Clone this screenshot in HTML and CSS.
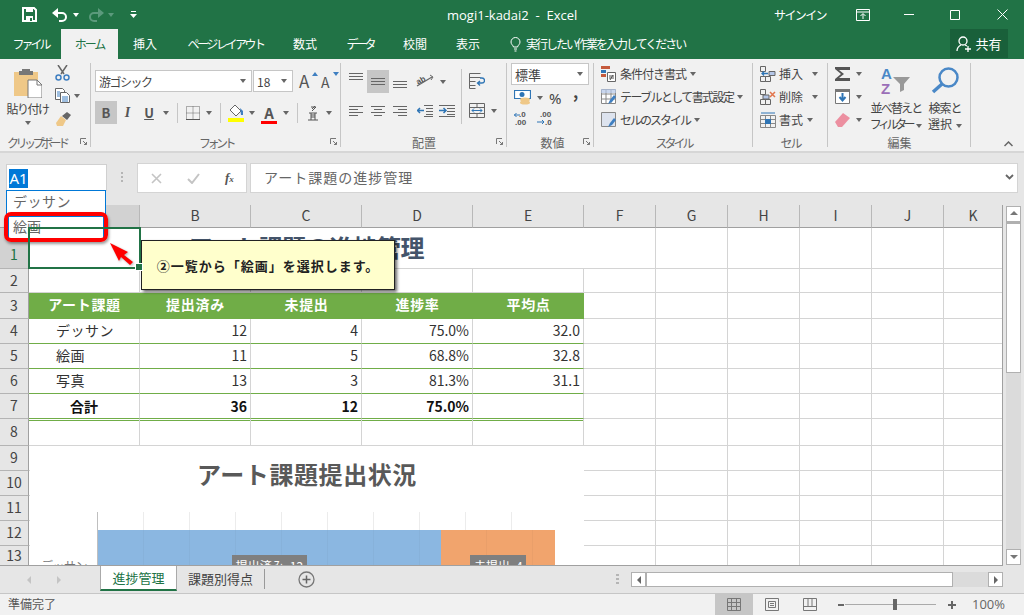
FILE: index.html
```html
<!DOCTYPE html>
<html lang="ja">
<head>
<meta charset="utf-8">
<title>mogi1-kadai2 - Excel</title>
<link rel="stylesheet" href="styles.css">
</head>
<body>
<div class="app">
  <header class="titlebar">
    <div class="qat">
      <svg class="q-save" width="15" height="15" viewBox="0 0 15 15"><path d="M1 1h11l2 2v11H1z" fill="none" stroke="#fff" stroke-width="2"/><path d="M4 1h7v4H4z" fill="#fff"/><path d="M4 9h7v5H4z" fill="#fff"/><path d="M8 11h2v3H8z" fill="#217346"/></svg>
      <svg class="q-undo" width="16" height="14" viewBox="0 0 16 14"><path d="M2 5h8a4 4 0 0 1 0 8H7" fill="none" stroke="#fff" stroke-width="2"/><path d="M6 0v10L0 5z" fill="#fff"/></svg>
      <i class="car wh q-c1"></i>
      <svg class="q-redo" width="16" height="14" viewBox="0 0 16 14"><path d="M14 5H6a4 4 0 0 0 0 8h3" fill="none" stroke="#5b9a7c" stroke-width="2"/><path d="M10 0v10l6-5z" fill="#5b9a7c"/></svg>
      <i class="car dim q-c2"></i>
      <svg class="q-more" width="7" height="8" viewBox="0 0 7 8"><path d="M1 0h5v1H1zM0 3h7L3.500 7z" fill="#fff"/></svg>
    </div>
    <div class="doc">mogi1-kadai2&nbsp; -&nbsp; Excel</div>
    <div class="signin">サインイン</div>
    <svg class="w-box" width="14" height="12" viewBox="0 0 14 12"><path d="M.5 .5h13v11H.500zM.5 3h13M7 10V5M4.500 7 7 4.500 9.500 7" fill="none" stroke="#fff"/></svg>
    <svg class="w-min" width="10" height="1" viewBox="0 0 10 1"><path d="M0 0h10v1H0z" fill="#fff"/></svg>
    <svg class="w-max" width="10" height="10" viewBox="0 0 10 10"><path d="M.5 .5h9v9h-9z" fill="none" stroke="#fff"/></svg>
    <svg class="w-close" width="11" height="11" viewBox="0 0 11 11"><path d="M.5 .5l10 10M10.500 .5l-10 10" stroke="#fff" fill="none"/></svg>
  </header>

  <nav class="tabs">
    <div class="tab k3">ファイル</div>
    <div class="tab on k2">ホーム</div>
    <div class="tab">挿入</div>
    <div class="tab k25">ページ レイアウト</div>
    <div class="tab">数式</div>
    <div class="tab k3">データ</div>
    <div class="tab">校閲</div>
    <div class="tab">表示</div>
    <div class="tell">
      <svg width="11" height="15" viewBox="0 0 11 15"><path d="M3.500 10C3 8 1 7.500 1 5a4.500 4.500 0 0 1 9 0c0 2.500-2 3-2.500 5zM4 12h3M4.500 14h2" fill="none" stroke="#fff"/></svg>
      <span class="k-t">実行したい作業を入力してください</span>
    </div>
    <div class="share">
      <svg width="15" height="16" viewBox="0 0 15 16"><circle cx="7" cy="5" r="4" fill="none" stroke="#fff" stroke-width="1.300"/><path d="M1 15c0-3 2-5 4-6M9 9l2 1M9 13h6M12 10v6" fill="none" stroke="#fff" stroke-width="1.300"/></svg>
      <span>共有</span>
    </div>
  </nav>

  <section class="ribbon">
    <div class="group g-clip">
      <div class="body">
        <div class="paste">
          <svg width="28" height="30" viewBox="0 0 28 30"><path d="M0 4h24v24H0z" fill="#efc888"/><path d="M8 1h8v2h3v4H5V3h3z" fill="#777"/><path d="M14 12h9l5 5v13H14z" fill="#fff" stroke="#777"/><path d="M23 12v5h5" fill="none" stroke="#777"/></svg>
          <div class="cap k15">貼り付け</div>
          <i class="car"></i>
        </div>
        <div class="rows3 clip-small">
          <div class="ri"><svg width="15" height="16" viewBox="0 0 15 16"><path d="M3 0l6 9M12 0L6 9" stroke="#666" stroke-width="1.500" fill="none"/><circle cx="3.500" cy="12.500" r="2.500" fill="none" stroke="#3f7fc1" stroke-width="1.500"/><circle cx="11.500" cy="12.500" r="2.500" fill="none" stroke="#3f7fc1" stroke-width="1.500"/></svg></div>
          <div class="ri"><svg width="15" height="15" viewBox="0 0 15 15"><path d="M.5 .5h7l2 2v9H.500z" fill="#fff" stroke="#666"/><path d="M5.500 4.500h6l3 3v7h-9z" fill="#fff" stroke="#666"/><path d="M2 4h3M2 6h3M2 8h3M7 9h6M7 11h6M7 13h6" stroke="#3f7fc1"/></svg><i class="car ml"></i></div>
          <div class="ri"><svg width="16" height="14" viewBox="0 0 16 14"><path d="M1 11l5-7 5 4-3 6H2z" fill="#efc888"/><path d="M7 4l5-4 4 3-4 5z" fill="#666"/></svg></div>
        </div>
      </div>
      <div class="label lk"><span>クリップボード</span><svg class="launch" width="7" height="7" viewBox="0 0 7 7"><path d="M.5 6V.5H6M3 3l3.500 3.500M6.500 4v2.500H4" fill="none" stroke="#777"/></svg></div>
    </div>

    <div class="group g-font">
      <div class="body col">
        <div class="f1">
          <div class="combo c-name"><span class="k15">游ゴシック</span><i class="car"></i></div>
          <div class="combo c-size"><span>18</span><i class="car"></i></div>
          <div class="bigA"><span>A</span><i class="tri up"></i></div>
          <div class="smallA"><span>A</span><i class="tri dn"></i></div>
        </div>
        <div class="f2">
          <div class="cell-i bold-b">B</div>
          <div class="cell-i ital">I</div>
          <div class="cell-i und">U</div>
          <div class="cell-i"><i class="car"></i></div>
          <div class="cell-i"><i class="vs"></i></div>
          <div class="cell-i"><svg width="14" height="14" viewBox="0 0 14 14"><path d="M.5 .5h13v13H.500zM7 .5v13M.5 7h13" fill="none" stroke="#666" stroke-dasharray="1 1"/><path d="M0 13h14v1H0z" fill="#555"/></svg></div>
          <div class="cell-i"><i class="car"></i></div>
          <div class="cell-i"><i class="vs"></i></div>
          <div class="cell-i"><svg width="17" height="18" viewBox="0 0 17 18"><path d="M7 1l6 6-5 5-6-6z" fill="#fff" stroke="#666"/><path d="M12 4l3 3v4h-2z" fill="#3f7fc1"/><path d="M0 14h16v4H0z" fill="#ffff00"/></svg></div>
          <div class="cell-i"><i class="car"></i></div>
          <div class="cell-i fcolor">A</div>
          <div class="cell-i"><i class="car"></i></div>
          <div class="cell-i"><i class="vs"></i></div>
          <div class="cell-i"><svg width="10" height="16" viewBox="0 0 10 16"><path d="M3 2h5L4 6M7 1 4 4" fill="none" stroke="#555"/><path d="M1 8h8M3 8v7M7 8v7M3 10h4M3 12h4M0 15h10" fill="none" stroke="#555"/></svg></div>
          <div class="cell-i"><i class="car"></i></div>
        </div>
      </div>
      <div class="label lk"><span>フォント</span><svg class="launch" width="7" height="7" viewBox="0 0 7 7"><path d="M.5 6V.5H6M3 3l3.500 3.500M6.500 4v2.500H4" fill="none" stroke="#777"/></svg></div>
    </div>

    <div class="group g-align">
      <div class="body">
        <div class="a-left">
          <div class="a1r">
            <div class="cell-i"><svg class="al-top" width="14" height="8" viewBox="0 0 14 8"><path d="M0 .5h14M0 3.500h14M0 6.500h14" stroke="#666"/></svg></div>
            <div class="cell-i act"><svg width="14" height="8" viewBox="0 0 14 8"><path d="M0 .5h14M0 3.500h14M0 6.500h14" stroke="#666"/></svg></div>
            <div class="cell-i"><svg class="al-bot" width="14" height="8" viewBox="0 0 14 8"><path d="M0 .5h14M0 3.500h14M0 6.500h14" stroke="#666"/></svg></div>
            <div class="cell-i"><svg width="18" height="15" viewBox="0 0 18 15"><path d="M1 12 16 3" stroke="#666" stroke-width="1.300"/><path d="M14 1l3 2-2 3" fill="none" stroke="#666"/><text x="1" y="9" class="ab" transform="rotate(-30 5 8)">ab</text></svg></div>
            <div class="cell-i"><i class="car"></i></div>
          </div>
          <div class="a2r">
            <div class="cell-i"><svg width="14" height="11" viewBox="0 0 14 11"><path d="M0 .5h14M0 3.500h9M0 6.500h14M0 9.500h9" stroke="#666"/></svg></div>
            <div class="cell-i"><svg width="14" height="11" viewBox="0 0 14 11"><path d="M0 .5h14M3 3.500h8M0 6.500h14M3 9.500h8" stroke="#666"/></svg></div>
            <div class="cell-i"><svg width="14" height="11" viewBox="0 0 14 11"><path d="M0 .5h14M5 3.500h9M0 6.500h14M5 9.500h9" stroke="#666"/></svg></div>
            <div class="cell-i"><svg width="16" height="12" viewBox="0 0 16 12"><path d="M7 .5h9M9 3.500h7M9 6.500h7M9 9.500h7M7 11.500h9" stroke="#666"/><path d="M0 5.500h7M3 3 .5 5.500 3 8" stroke="#2f75b5" stroke-width="1.500" fill="none"/></svg></div>
            <div class="cell-i"><svg width="16" height="12" viewBox="0 0 16 12"><path d="M0 .5h16M8 3.500h8M8 6.500h8M8 9.500h8M0 11.500h16" stroke="#666"/><path d="M0 5.500h7M4.500 3 7 5.500 4.500 8" stroke="#2f75b5" stroke-width="1.500" fill="none"/></svg></div>
          </div>
        </div>
        <i class="vs tall"></i>
        <div class="a-right">
          <div class="cell-i a-wrap"><svg width="16" height="16" viewBox="0 0 16 16"><path d="M.5 .5h11M.5 4.500h11M.5 8.500h6M.5 12.500h6M.5 .5v15h6" fill="none" stroke="#666"/><path d="M9 10h4a2 2 0 0 0 0-5h-2M11 8 8.500 10 11 12.500" fill="none" stroke="#2f75b5" stroke-width="1.300"/></svg></div>
          <div class="a-merge"><svg width="16" height="15" viewBox="0 0 16 15"><path d="M.5 .5h15v14H.500zM.5 4.500h15M.5 10.500h15M8 .5v4M8 10.500v4" fill="none" stroke="#666"/><path d="M3 7.500h10M5 5.500l-2 2 2 2M11 5.500l2 2-2 2" fill="none" stroke="#2f75b5"/></svg><i class="car ml"></i></div>
        </div>
      </div>
      <div class="label"><span>配置</span><svg class="launch" width="7" height="7" viewBox="0 0 7 7"><path d="M.5 6V.5H6M3 3l3.500 3.500M6.500 4v2.500H4" fill="none" stroke="#777"/></svg></div>
    </div>

    <div class="group g-num">
      <div class="body col">
        <div class="combo c-num"><span>標準</span><i class="car"></i></div>
        <div class="n2">
          <svg width="17" height="16" viewBox="0 0 17 16"><path d="M.5 .5h16v8H.500z" fill="#fff" stroke="#2f75b5" stroke-width="1.200"/><circle cx="8" cy="4.500" r="2.500" fill="#2f75b5"/><ellipse cx="11" cy="9.500" rx="5" ry="2" fill="#efc888"/><ellipse cx="11" cy="12.500" rx="5" ry="2" fill="#efc888"/></svg>
          <i class="car n-c"></i>
          <span class="pct">%</span>
          <span class="comma">,</span>
        </div>
        <div class="n3">
          <svg width="16" height="15" viewBox="0 0 16 15"><text x="5" y="6" class="dec">.0</text><text x="1" y="14" class="dec">.00</text><path d="M0 4h6M2.500 2 .5 4l2 2" stroke="#2f75b5" fill="none"/></svg>
          <svg width="16" height="15" viewBox="0 0 16 15"><text x="3" y="6" class="dec">.00</text><text x="8" y="14" class="dec">.0</text><path d="M0 11h7M5 9l2 2-2 2" stroke="#2f75b5" fill="none"/></svg>
        </div>
      </div>
      <div class="label"><span>数値</span><svg class="launch" width="7" height="7" viewBox="0 0 7 7"><path d="M.5 6V.5H6M3 3l3.500 3.500M6.500 4v2.500H4" fill="none" stroke="#777"/></svg></div>
    </div>

    <div class="group g-style">
      <div class="body rows3">
        <div class="ri"><svg width="15" height="16" viewBox="0 0 15 16"><path d="M0 0h9v3H0z" fill="#c55a3c"/><path d="M0 4h5v3H0z" fill="#2f75b5"/><path d="M0 8h5v3H0z" fill="#c55a3c"/><path d="M6.500 6.500h8v9h-8z" fill="#fff" stroke="#666"/><path d="M8 10h5M8 12h5M12 9l-3 5" stroke="#555" fill="none"/></svg><span class="k1 txt">条件付き書式</span><i class="car ml"></i></div>
        <div class="ri"><svg width="15" height="16" viewBox="0 0 15 16"><path d="M.5 .5h14v14H.500zM.5 5h14M.5 10h14M5 .5v14M10 .5v14" fill="#fff" stroke="#888"/><path d="M0 0h15v4H0z" fill="#b4c6e7" opacity=".7"/><path d="M7 15l2-4 4-5 2 2-4 5z" fill="#3f7fc1"/></svg><span class="k17 txt">テーブルとして書式設定</span><i class="car ml"></i></div>
        <div class="ri"><svg width="15" height="16" viewBox="0 0 15 16"><path d="M.5 .5h14v14H.500z" fill="#dde3ee" stroke="#888"/><path d="M7 15l2-4 4-5 2 2-4 5z" fill="#3f7fc1"/></svg><span class="k2 txt">セルのスタイル</span><i class="car ml"></i></div>
      </div>
      <div class="label lk3">スタイル</div>
    </div>

    <div class="group g-cell">
      <div class="body rows3">
        <div class="ri"><svg width="16" height="16" viewBox="0 0 16 16"><path d="M.5 .5h5v5h-5zM.5 10.500h5v5h-5zM5.500 10.500h5v5h-5z" fill="none" stroke="#666"/><path d="M9 5.500h6v4H9z" fill="#b4c6e7" stroke="#666"/><path d="M2 7.500h6M4 5.500l-2 2 2 2" stroke="#2f75b5" fill="none" stroke-width="1.300"/></svg><span class="txt">挿入</span><i class="car c-a"></i></div>
        <div class="ri"><svg width="16" height="16" viewBox="0 0 16 16"><path d="M.5 .5h5v5h-5zM.5 10.500h5v5h-5zM5.500 10.500h5v5h-5z" fill="none" stroke="#666"/><path d="M3 6h6v4H3z" fill="#b4c6e7" stroke="#666"/><path d="M10 3l5 5M15 3l-5 5" stroke="#e2754c" stroke-width="1.500"/></svg><span class="txt">削除</span><i class="car c-a"></i></div>
        <div class="ri"><svg width="16" height="16" viewBox="0 0 16 16"><path d="M.5 3.500h15v12H.500zM.5 7.500h15M.5 11.500h15M5.500 3.500v12M10.500 3.500v12" fill="none" stroke="#888"/><path d="M5 7h6v5H5z" fill="#2f75b5"/><path d="M1 1h14" stroke="#2f75b5"/></svg><span class="txt">書式</span><i class="car ml"></i></div>
      </div>
      <div class="label k2">セル</div>
    </div>

    <div class="group g-edit">
      <div class="body">
        <div class="rows3 e-left">
          <div class="ri"><svg width="15" height="14" viewBox="0 0 15 14"><path d="M0 0h15v3H4l5 4-5 4h11v3H0v-2l6-5-6-5z" fill="#555"/></svg><i class="car ml2"></i></div>
          <div class="ri"><svg width="15" height="15" viewBox="0 0 15 15"><path d="M.5 .5h14v14H.500z" fill="#fff" stroke="#777"/><path d="M0 0h15v3H0z" fill="#777"/><path d="M7.500 4v6M4.500 8l3 3.500L10.500 8" stroke="#2f75b5" stroke-width="2" fill="none"/></svg><i class="car ml2"></i></div>
          <div class="ri"><svg width="15" height="14" viewBox="0 0 15 14"><path d="M0 9l8-9 7 5-8 9H3z" fill="#ec8fa0"/></svg><i class="car ml2"></i></div>
        </div>
        <div class="bigbtn b-sort">
          <svg width="30" height="27" viewBox="0 0 30 27"><text x="0" y="12" class="az1">A</text><text x="0" y="27" class="az2">Z</text><path d="M12 10h17l-6 7v6l-4 2v-8z" fill="#999"/></svg>
          <div class="cap2 k18">並べ替えと</div>
          <div class="cap2 k35">フィルター<i class="car ml"></i></div>
        </div>
        <div class="bigbtn b-find">
          <svg width="28" height="27" viewBox="0 0 28 27"><circle cx="17.500" cy="10.500" r="9" fill="none" stroke="#4a88c7" stroke-width="2.500"/><path d="M11 17 2 25" stroke="#4a88c7" stroke-width="3.500"/></svg>
          <div class="cap2 k1">検索と</div>
          <div class="cap2">選択<i class="car ml"></i></div>
        </div>
      </div>
      <div class="label">編集</div>
    </div>

    <svg class="collapse" width="9" height="6" viewBox="0 0 9 6"><path d="M.5 5l4-4 4 4" fill="none" stroke="#666" stroke-width="1.500"/></svg>
  </section>

  <section class="fbar">
    <div class="namebox"><span class="sel">A1</span></div>
    <div class="grip"></div>
    <div class="fbtns">
      <svg width="11" height="11" viewBox="0 0 11 11"><path d="M1 1l9 9M10 1l-9 9" stroke="#c4c4c4" stroke-width="1.600"/></svg>
      <svg width="13" height="11" viewBox="0 0 13 11"><path d="M1 6l4 4 7-9" fill="none" stroke="#c4c4c4" stroke-width="2"/></svg>
      <span class="fx">f<sub>x</sub></span>
    </div>
    <div class="finput"><span>アート課題の進捗管理</span>
      <svg width="9" height="6" viewBox="0 0 9 6"><path d="M1 1l3.500 3.500L8 1" fill="none" stroke="#666" stroke-width="1.800"/></svg>
    </div>
  </section>

  <section class="work">
    <div class="sheet">
      <b class="corner"></b><b class="ch cur">A</b><b class="ch">B</b><b class="ch">C</b><b class="ch">D</b><b class="ch">E</b><b class="ch">F</b><b class="ch">G</b><b class="ch">H</b><b class="ch">I</b><b class="ch">J</b><b class="ch">K</b>

      <b class="rh cur low">1</b><div class="a1"></div><div class="title">アート課題の進捗管理</div><i></i><i></i><i></i><i></i><i></i><i></i>

      <b class="rh">2</b><i></i><i></i><i></i><i></i><i></i><i></i><i></i><i></i><i></i><i></i><i></i>

      <b class="rh">3</b><div class="th">アート課題</div><div class="th">提出済み</div><div class="th">未提出</div><div class="th">進捗率</div><div class="th">平均点</div><i></i><i></i><i></i><i></i><i></i><i></i>

      <b class="rh">4</b><div class="td name">デッサン</div><div class="td">12</div><div class="td">4</div><div class="td">75.0%</div><div class="td">32.0</div><i></i><i></i><i></i><i></i><i></i><i></i>

      <b class="rh">5</b><div class="td name">絵画</div><div class="td">11</div><div class="td">5</div><div class="td">68.8%</div><div class="td">32.8</div><i></i><i></i><i></i><i></i><i></i><i></i>

      <b class="rh">6</b><div class="td name">写真</div><div class="td">13</div><div class="td">3</div><div class="td">81.3%</div><div class="td">31.1</div><i></i><i></i><i></i><i></i><i></i><i></i>

      <b class="rh">7</b><div class="td tot name2">合計</div><div class="td tot">36</div><div class="td tot">12</div><div class="td tot">75.0%</div><div class="td tot"></div><i></i><i></i><i></i><i></i><i></i><i></i>

      <b class="rh">8</b><i class="dbl"></i><i class="dbl"></i><i class="dbl"></i><i class="dbl"></i><i class="dbl"></i><i></i><i></i><i></i><i></i><i></i><i></i>

      <b class="rh">9</b><i></i><i></i><i></i><i></i><i></i><i></i><i></i><i></i><i></i><i></i><i></i>
      <b class="rh">10</b><i></i><i></i><i></i><i></i><i></i><i></i><i></i><i></i><i></i><i></i><i></i>
      <b class="rh">11</b><i></i><i></i><i></i><i></i><i></i><i></i><i></i><i></i><i></i><i></i><i></i>
      <b class="rh">12</b><i></i><i></i><i></i><i></i><i></i><i></i><i></i><i></i><i></i><i></i><i></i>
      <b class="rh">13</b><i></i><i></i><i></i><i></i><i></i><i></i><i></i><i></i><i></i><i></i><i></i>

      <div class="chart">
        <div class="ctitle">アート課題提出状況</div>
        <div class="plot">
          <div class="cat">デッサン</div>
          <div class="bars">
            <div class="bar blue"><span class="dl dl1">提出済み, 12</span></div>
            <div class="bar orange"><span class="dl dl2">未提出, 4</span></div>
          </div>
        </div>
      </div>
    </div>
    <div class="vscroll">
      <div class="sbtn"><i class="tri up gray"></i></div>
      <div class="vthumb"></div>
      <div class="vtrack"></div>
      <div class="sbtn"><i class="tri dn gray"></i></div>
    </div>
  </section>

  <section class="tabbar">
    <div class="nav"><i class="tl"></i><i class="tr"></i></div>
    <div class="stab active">進捗管理</div>
    <div class="stab second">課題別得点</div>
    <svg class="plus" width="17" height="17" viewBox="0 0 17 17"><circle cx="8.500" cy="8.500" r="7.500" fill="none" stroke="#777" stroke-width="1.300"/><path d="M4.500 8.500h8M8.500 4.500v8" stroke="#666" stroke-width="1.500"/></svg>
    <div class="grip2"></div>
    <div class="hscroll">
      <div class="hbtn"><i class="tl dk"></i></div>
      <div class="hthumb"></div>
      <div class="htrack"></div>
      <div class="hbtn"><i class="tr dk"></i></div>
    </div>
  </section>

  <footer class="status">
    <div class="ready">準備完了</div>
    <div class="view on"><svg width="14" height="13" viewBox="0 0 14 13"><path d="M.5 .5h13v12H.500zM.5 4.500h13M.5 8.500h13M4.500 .5v12M9.500 .5v12" fill="none" stroke="#777"/></svg></div>
    <div class="view"><svg width="14" height="13" viewBox="0 0 14 13"><path d="M.5 .5h13v12H.500zM3.500 3.500h7v6h-7zM5 5.500h4M5 7.500h4" fill="none" stroke="#777"/></svg></div>
    <div class="view"><svg width="14" height="13" viewBox="0 0 14 13"><path d="M.5 .5h13v12H.500zM.5 8.500h13M5 .5v8M9 .5v8" fill="none" stroke="#777"/></svg></div>
    <div class="zoomer"><span class="zm"></span><span class="slider"><span class="knob"></span></span><span class="zp"></span></div>
    <div class="pct100">100%</div>
  </footer>

  <div class="dropdown">
    <div class="dd-item k-dd">デッサン</div>
    <div class="dd-item picked">絵画</div>
  </div>
  <div class="redbox"></div>
  <svg class="redarrow" width="24" height="22" viewBox="0 0 24 22"><path d="M0 0l18 9-4 3 9 7-3 3-9-8-2 4z" fill="#f00"/></svg>
  <div class="callout">②一覧から「絵画」を選択します。</div>
</div>
</body>
</html>
```
FILE: styles.css
```css
*{box-sizing:border-box}
html,body{margin:0;padding:0}
body{width:1024px;height:615px;overflow:hidden;font-family:"Noto Sans CJK JP","Noto Sans",sans-serif;font-size:12px;color:#444}
.app{position:relative;width:1024px;height:615px;background:#e6e6e6;overflow:hidden}
svg{display:block;flex:none}
i,b{font-style:normal;font-weight:normal}

.k1{letter-spacing:-1px}
.k15{letter-spacing:-1.500px}
.k17{letter-spacing:-1.600px}
.k18{letter-spacing:-1.800px}
.k2{letter-spacing:-2px}
.k25{letter-spacing:-2.500px}
.k3{letter-spacing:-3px}
.k35{letter-spacing:-3.500px}

.car{display:inline-block;flex:none;width:0;height:0;border-left:3.500px solid transparent;border-right:3.500px solid transparent;border-top:4px solid #666}
.car.wh{border-top-color:#fff}
.car.dim{border-top-color:#5b9a7c}
.ml{margin-left:4px;vertical-align:middle}
.ml2{margin-left:6px}

.titlebar{height:29px;background:#217346;display:flex;align-items:center;color:#fff}
.qat{width:447px;display:flex;align-items:center}
.q-save{margin-left:22px}
.q-undo{margin-left:15px}
.q-c1{margin-left:5px}
.q-redo{margin-left:9px}
.q-c2{margin-left:4px}
.q-more{margin-left:16px}
.doc{width:128px;font:13px/20px "Open Sans",sans-serif;white-space:nowrap}
.signin{margin-left:199px;width:46px;letter-spacing:-1.600px;line-height:20px;white-space:nowrap}
.w-box{margin-left:36px}
.w-min{margin-left:34px}
.w-max{margin-left:36px}
.w-close{margin-left:37px}

.tabs{height:30px;background:#217346;display:grid;grid-template-columns:61px 57px 54px 107px 52px 58px 52px 54px 455px 58px;color:#fff;line-height:30px;text-align:center;white-space:nowrap}
.tab.on{background:#f1f1f1;color:#217346}
.tell{display:flex;align-items:center;padding-left:15px;gap:5px}
.k-t{letter-spacing:-2px}
.share{background:#19603a;display:flex;align-items:center;justify-content:center;gap:4px;height:29px;font-size:13px}

.ribbon{position:relative;height:94px;background:#f1f1f1;border-bottom:2px solid #d6d6d6;display:flex}
.group{position:relative;display:flex;flex-direction:column;height:92px;flex:none}
.group::after{content:"";position:absolute;right:0;top:4px;bottom:4px;width:1px;background:#c6c6c6}
.body{display:flex;height:76px;flex:none}
.body.col{flex-direction:column}
.label{position:relative;height:16px;line-height:16px;text-align:center;color:#666;white-space:nowrap}
.lk span{letter-spacing:-3.500px}
.lk3{letter-spacing:-3px}
.launch{position:absolute;right:4px;top:3px}
.rows3{display:grid;grid-auto-rows:23px;padding-top:3px}
.ri{display:flex;align-items:center;white-space:nowrap}
.txt{margin-left:4px}
.cell-i{display:flex;align-items:center;justify-content:center}

.g-clip{width:91px}
.g-clip .label{text-align:left;padding-left:7px}
.paste{width:55px;display:flex;flex-direction:column;align-items:center;padding-top:9px}
.cap{line-height:14px;margin-top:4px;white-space:nowrap}
.paste .car{margin-top:5px}
.clip-small{margin-top:-1px}

.g-font{width:250px}
.f1{display:flex;align-items:center;padding:11px 0 0 4px;height:33px}
.combo{display:flex;align-items:center;justify-content:space-between;background:#fff;border:1px solid #c6c6c6;height:22px;padding:0 5px 0 3px;color:#444;white-space:nowrap}
.c-name{width:157px}
.c-size{width:40px;margin-left:1px}
.bigA,.smallA{position:relative;color:#555}
.bigA{font-size:17px;line-height:22px;margin-left:6px;width:16px}
.smallA{font-size:14px;line-height:22px;margin-left:6px;margin-top:2px;width:14px}
.tri{position:absolute;width:0;height:0;border-left:3px solid transparent;border-right:3px solid transparent}
.tri.up{border-bottom:4px solid #3f7fc1;right:-3px;top:2px}
.tri.dn{border-top:4px solid #3f7fc1;right:-4px;top:1px}
.f2{display:grid;grid-template-columns:22px 21px 22px 12px 10px 21px 12px 10px 22px 10px 24px 10px 12px 20px 12px;grid-auto-rows:23px;margin:9px 0 0 4px}
.vs{display:block;width:1px;height:20px;background:#c6c6c6}
.bold-b{background:#c6c6c6;font-weight:bold;font-size:13px;color:#555}
.ital{font:italic bold 14px "Liberation Serif",serif;color:#555}
.und{font-weight:bold;text-decoration:underline;font-size:13px;color:#555}
.fcolor{font-weight:bold;font-size:15px;color:#555;line-height:16px;background:linear-gradient(#f00,#f00) center 20px/16px 3px no-repeat}

.g-align{width:166px}
.a-left{padding:11px 0 0 4px}
.a1r{display:grid;grid-template-columns:22px 22px 22px 27px 9px;grid-auto-rows:23px}
.a2r{display:grid;grid-template-columns:22px 22px 22px 28px 16px;grid-auto-rows:16px;margin-top:10px}
.act{background:#c6c6c6}
.al-top{margin-bottom:10px}
.al-bot{margin-top:7px}
.ab{font:bold 8px "Liberation Sans",sans-serif;fill:#555}
.vs.tall{height:55px;margin:10px 0 0 6px}
.a-right{padding:14px 0 0 7px}
.a-wrap{width:16px;height:16px}
.a-merge{display:flex;align-items:center;margin-top:14px}
.a-merge .car{margin-left:6px}

.g-num{width:87px;padding-left:4px}
.c-num{width:78px;height:22px;margin-top:4px;font-size:13px}
.n2{display:flex;align-items:center;height:22px;margin:2px 0 0 3px}
.n-c{margin-left:6px}
.pct{font-size:15px;margin-left:6px;width:15px;font-family:"Noto Sans",sans-serif}
.comma{font-size:16px;font-weight:bold;margin-left:9px;line-height:14px;margin-top:-14px}
.n3{display:flex;gap:7px;margin:2px 0 0 3px}
.dec{font:bold 8px "Liberation Sans",sans-serif;fill:#555}

.g-style{width:159px}
.g-style .rows3,.g-cell .rows3{padding-left:7px}
.g-cell{width:75px}
.g-cell .txt{margin-left:3px}
.c-a{margin-left:9px}
.g-edit{width:143px}
.e-left{padding-left:7px;width:41px}
.bigbtn{display:flex;flex-direction:column;align-items:center;padding-top:8px;white-space:nowrap;color:#444}
.bigbtn svg{margin-bottom:6px}
.cap2{line-height:16px}
.b-sort{width:54px}
.b-find{width:36px;margin-left:4px}
.az1{font:bold 15px "Liberation Sans",sans-serif;fill:#4a88c7}
.az2{font:bold 15px "Liberation Sans",sans-serif;fill:#9b6fb8}
.collapse{position:absolute;right:11px;top:82px}

.fbar{height:52px;display:flex;align-items:flex-start;padding:10px 0 0 6px}
.namebox{width:101px;height:27px;margin-top:1px;background:#fff;border:1px solid #d0d0d0;padding:3px 0 0 2px;line-height:19px;font-size:15px}
.sel{display:inline-block;background:#0078d7;color:#fff;height:19px;width:19px;font-family:"Noto Sans",sans-serif;text-align:center;line-height:18px}
.grip{width:2px;height:11px;margin:9px 14px 0 14px;background:repeating-linear-gradient(#b5b5b5 0 2px,transparent 2px 4px)}
.fbtns{width:110px;height:30px;background:#fff;border:1px solid #d4d4d4;display:flex;align-items:center;padding-left:13px;gap:25px}
.fx{font:italic bold 13px "Liberation Serif",serif;color:#555}
.fx sub{font-size:9px;vertical-align:baseline}
.finput{width:768px;height:30px;margin-left:3px;background:#fff;border:1px solid #d4d4d4;display:flex;align-items:center;justify-content:space-between;padding:0 3px 2px 13px;font-size:14px;letter-spacing:1px;color:#666}

.work{height:361px;display:flex}
.sheet{position:relative;width:1003px;height:361px;overflow:hidden;display:grid;grid-template-columns:29px 111px 111px 111px 111px 111px 72px 72px 72px 72px 72px 59px;grid-template-rows:23px 41px 24px 26px 25px 25px 25px 25px 27px 25px 25px 25px 25px 21px;background:#fff;border-right:1px solid #a0a0a0;border-bottom:1px solid #a0a0a0}
.sheet>i{display:block;border-right:1px solid #d4d4d4;border-bottom:1px solid #d4d4d4}
.sheet>i.dbl{background:linear-gradient(#fff 1px,#70ad47 1px,#70ad47 2px,#fff 2px)}
.corner{background:#e6e6e6;border-bottom:1px solid #a0a0a0;border-right:1px solid #c0c0c0}
.ch{background:#e6e6e6;border-right:1px solid #b8b8b8;border-bottom:1px solid #a0a0a0;text-align:center;line-height:21px;font-size:14px;color:#444}
.ch.cur{background:#d2d2d2}
.rh{background:#e6e6e6;border-right:1px solid #a0a0a0;border-bottom:1px solid #b4b4b4;text-align:center;font-size:14px;color:#444;display:flex;align-items:center;justify-content:center;padding-bottom:2px}
.rh.cur{background:#d2d2d2;color:#217346}
.rh.low{padding:11px 0 0}
.a1{position:relative;z-index:2;margin:-1px -1px 0 -1px;border:2px solid #217346;grid-column:2;grid-row:2}
.a1::after{content:"";position:absolute;right:-4px;bottom:-4px;width:6px;height:6px;background:#217346;border:1px solid #fff}
.title{grid-column:2/7;grid-row:2;font-size:24px;font-weight:bold;color:#44546a;text-align:center;line-height:37px;white-space:nowrap;border-bottom:1px solid #d4d4d4;letter-spacing:-.3px}
.th{background:#70ad47;color:#fff;font-weight:bold;font-size:14px;text-align:center;line-height:23px;letter-spacing:.7px}
.td{border-right:1px solid #d4d4d4;border-bottom:1px solid #70ad47;font-size:14px;text-align:right;padding-right:3px;line-height:22px;color:#333}
.td.name{text-align:left;padding-left:27px;letter-spacing:.5px}
.tot{font-weight:bold;color:#111;line-height:24px}
.td.name2{text-align:left;padding-left:41px}

.chart{position:absolute;left:30px;top:241px;width:554px;height:119px;background:#fff;overflow:hidden;display:flex;flex-direction:column}
.ctitle{height:66px;text-align:center;font-size:24px;font-weight:bold;color:#595959;line-height:56px;letter-spacing:.6px;flex:none}
.plot{display:flex;flex:1;position:relative}
.cat{width:67px;flex:none;padding:46px 10px 0 0;text-align:right;font-size:12px;line-height:16px;color:#777;letter-spacing:-.500px;white-space:nowrap}
.bars{width:458px;flex:none;height:60px;display:flex;padding-top:18px;border-left:1px solid #bfbfbf;background:repeating-linear-gradient(90deg,transparent 0 45px,#ececec 45px 46px)}
.bar{position:relative;height:60px}
.bar::after{content:"";position:absolute;inset:0;background:repeating-linear-gradient(90deg,transparent 0 45px,rgba(0,0,0,.03) 45px 46px)}
.blue{width:344px;background:#8bb7e1}
.orange{width:114px;background:#f1a46d}
.dl{position:absolute;z-index:1;top:25px;height:22px;background:#7f7f7f;color:#fff;font-size:12px;line-height:22px;text-align:center;white-space:nowrap}
.dl1{left:134px;width:75px}
.dl2{left:29px;width:56px}

.vscroll{width:21px;height:361px;padding:1px 3px 1px 3px;display:flex;flex-direction:column;flex:none}
.sbtn{position:relative;height:16px;background:#fff;border:1px solid #b0b0b0;flex:none}
.tri.gray.up{border-left-width:4px;border-right-width:4px;border-bottom-color:#777;left:3px;top:4px;right:auto}
.tri.gray.dn{border-left-width:4px;border-right-width:4px;border-top-color:#777;left:3px;top:5px;right:auto}
.vthumb{height:151px;background:#fff;border:1px solid #b0b0b0;border-top:2px solid #b0b0b0}
.vtrack{flex:1;background:#dbdbdb}

.tabbar{position:relative;height:28px;display:flex;align-items:flex-start;background:#e6e6e6;border-bottom:1px solid #c6c6c6}
.nav{width:100px;height:27px;display:flex;align-items:center;padding-left:27px;gap:26px}
.tl,.tr{display:block;width:0;height:0;border-top:4px solid transparent;border-bottom:4px solid transparent}
.tl{border-right:4px solid #c4c4c4}
.tr{border-left:4px solid #c4c4c4}
.tl.dk{border-right-color:#666}
.tr.dk{border-left-color:#666}
.stab{height:25px;line-height:24px;font-size:13px;white-space:nowrap;padding:0 11px;color:#444}
.stab.active{width:77px;background:#fff;color:#217346;border-bottom:2px solid #217346;border-left:1px solid #aaa;border-right:1px solid #aaa;text-align:center;padding:0}
.stab.second{width:88px;border-right:1px solid #999;height:20px;margin-top:3px;line-height:20px}
.plus{margin:5px 0 0 33px}
.grip2{width:3px;height:11px;margin:8px 0 0 301px;background:repeating-linear-gradient(#b5b5b5 0 2px,transparent 2px 4px)}
.hscroll{width:372px;height:15px;margin:6px 0 0 12px;display:flex}
.hbtn{width:15px;background:#fff;border:1px solid #b0b0b0;display:flex;align-items:center;justify-content:center;flex:none}
.hthumb{width:307px;background:#fff;border:1px solid #b0b0b0}
.htrack{flex:1;background:#dbdbdb}

.status{height:21px;background:#f1f1f1;display:flex;align-items:stretch}
.ready{width:715px;padding-left:8px;line-height:20px;color:#555}
.view{width:38px;display:flex;align-items:center;justify-content:center}
.view.on{background:#c6c6c6}
.zoomer{position:relative;display:flex;align-items:center;width:105px;margin-left:2px;padding-left:14px}
.zm,.zp{position:absolute;top:50%;height:2px;width:6px;background:#666;margin-top:-1px}
.zm{left:7px}
.zp{left:117px;width:8px}
.zp::after{content:"";position:absolute;left:3px;top:-3px;width:2px;height:8px;background:#666}
.slider{position:relative;display:block;width:100px;height:1px;background:#aaa}
.knob{position:absolute;left:48px;top:-5px;width:4px;height:11px;background:#666}
.pct100{margin-left:36px;font:13px/21px "Open Sans",sans-serif;color:#666}

.dropdown{position:absolute;left:6px;top:190px;width:100px;height:50px;background:#fff;border:1px solid #0078d7}
.dd-item{height:24px;line-height:20px;padding-left:6px;font-size:14px;color:#666}
.k-dd{letter-spacing:.5px}
.dd-item.picked{margin:1px 1px 0;height:23px;border:1px solid #0078d7;padding-left:4px;line-height:19px}
.redbox{position:absolute;left:4px;top:212px;width:104px;height:30px;border:4px solid #f00;border-radius:7px;box-shadow:1px 2px 3px rgba(0,0,0,.4)}
.redarrow{position:absolute;left:110px;top:243px;filter:drop-shadow(1px 1px 1px rgba(0,0,0,.3))}
.callout{position:absolute;left:141px;top:240px;width:254px;height:50px;background:#ffffcc;border:1px solid #222;box-shadow:2px 2px 3px rgba(0,0,0,.6);font-size:13px;font-weight:bold;letter-spacing:1px;color:#222;display:flex;align-items:center;justify-content:center;white-space:nowrap}
```
